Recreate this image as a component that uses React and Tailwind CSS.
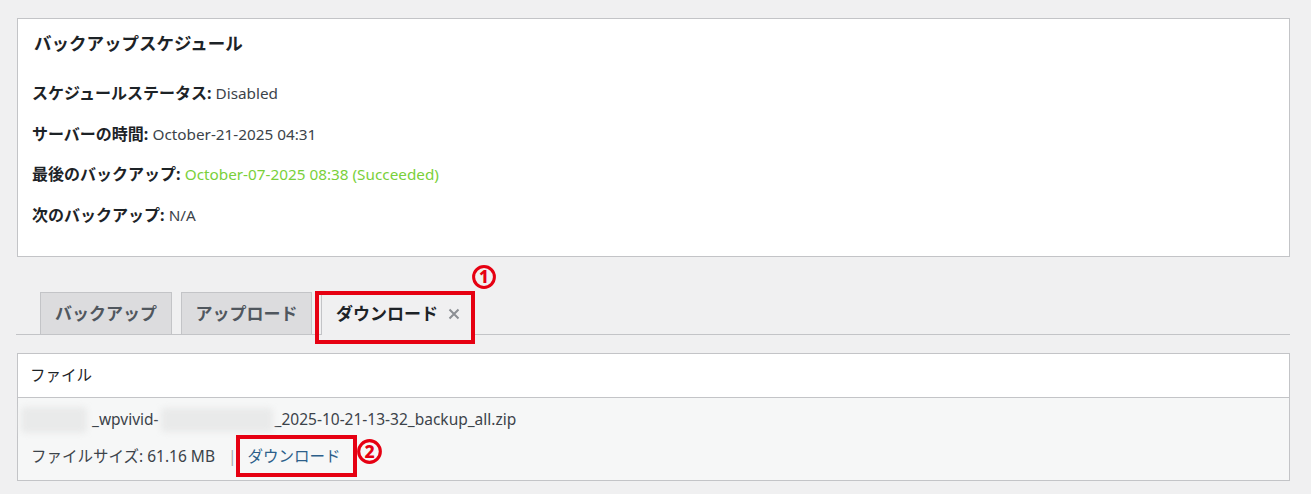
import React from 'react';

const FONT = { fontFamily: '"Noto Sans", "Noto Sans CJK JP", sans-serif' };

const Row = ({ label, children, className = '' }) => (
  <p className="leading-[20px] text-[#3c434a]">
    <span className="text-[16px] font-bold text-[#1d2327]">{label}:</span>{' '}
    <span className={`text-[15.3px] ${className}`}>{children}</span>
  </p>
);

const Marker = ({ n, className = '' }) => (
  <svg viewBox="0 0 24 24" className={`absolute ${className}`}>
    <circle cx="12" cy="12" r="10.4" fill="none" stroke="#e60012" strokeWidth="3" />
    <text x="12" y="18" textAnchor="middle" fontSize="17" fontWeight="800" fill="#e60012" fontFamily="Noto Sans, sans-serif">
      {n}
    </text>
  </svg>
);

const Blur = ({ className = '' }) => (
  <span className={`inline-block align-middle bg-[#e9eaea] blur-[3px] rounded ${className}`} />
);

export default function App() {
  return (
    <div className="min-h-screen bg-[#f0f0f1] pl-[17px] pr-[21px] pt-[18px]" style={FONT}>
      {/* Schedule card */}
      <div className="h-[239px] border border-[#c3c4c7] bg-white pl-[14px] pt-[12px]">
        <h2 className="text-[17.5px] leading-[24px] font-bold text-[#1d2327] pl-[2px]">バックアップスケジュール</h2>
        <div className="mt-[28px] flex flex-col gap-[20.5px]">
          <Row label="スケジュールステータス">Disabled</Row>
          <Row label="サーバーの時間">October-21-2025 04:31</Row>
          <Row label="最後のバックアップ" className="text-[#7ad03a]">October-07-2025 08:38 (Succeeded)</Row>
          <Row label="次のバックアップ">N/A</Row>
        </div>
      </div>

      {/* Tabs */}
      <div className="mt-[35px] flex items-end gap-[9px] border-b border-[#c3c4c7] pl-[24px] -ml-[1px]">
        <div className="flex h-[42px] w-[132px] items-center justify-center border border-b-0 border-[#c3c4c7] bg-[#dcdcde] text-[17px] font-bold text-[#50575e]">
          バックアップ
        </div>
        <div className="flex h-[42px] w-[131px] items-center justify-center border border-b-0 border-[#c3c4c7] bg-[#dcdcde] text-[17px] font-bold text-[#50575e]">
          アップロード
        </div>
        <div className="relative -mb-[1px] flex h-[43px] w-[152px] items-center border border-b-0 border-[#c3c4c7] bg-[#f0f0f1] pl-[14px] text-[17px] font-bold text-[#1d2327]">
          ダウンロード
          <svg viewBox="0 0 12 12" className="ml-[10px] h-[12px] w-[12px]">
            <path d="M1.5 1.5 L10.5 10.5 M10.5 1.5 L1.5 10.5" stroke="#8c8f94" strokeWidth="2" />
          </svg>
          <div className="absolute -left-[7px] -top-[2px] h-[53px] w-[160px] border-[4px] border-[#e60012]" />
          <Marker n="1" className="left-[150px] -top-[28px] h-[24px] w-[24px]" />
        </div>
      </div>

      {/* Files card */}
      <div className="mt-[18px] border border-[#c3c4c7]">
        <div className="h-[44px] flex items-center bg-white pl-[12px] text-[15.5px] text-[#1d2327] border-b border-[#c3c4c7]">
          ファイル
        </div>
        <div className="h-[82px] bg-[#f6f7f7] pl-[13px] pt-[12px] text-[15.5px] text-[#3c434a]">
          <div className="flex items-center h-[20px]">
            <Blur className="h-[26px] w-[66px] -ml-[10px] mr-[2px]" />
            <span className="ml-[3px]">_wpvivid-</span>
            <Blur className="h-[24px] w-[112px] ml-[2px] mr-[2px]" />
            <span>_2025-10-21-13-32_backup_all.zip</span>
          </div>
          <div className="mt-[17px] flex items-center h-[20px]">
            <span>ファイルサイズ: 61.16 MB</span>
            <span className="ml-[13px] mr-[11px] text-[#a7aaad]">|</span>
            <span className="relative text-[#2c5f8a]">
              ダウンロード
              <div className="absolute -left-[12px] -top-[10px] h-[42px] w-[121px] border-[4px] border-[#e60012]" />
              <Marker n="2" className="left-[109px] -top-[6px] h-[25px] w-[25px]" />
            </span>
          </div>
        </div>
      </div>
    </div>
  );
}
